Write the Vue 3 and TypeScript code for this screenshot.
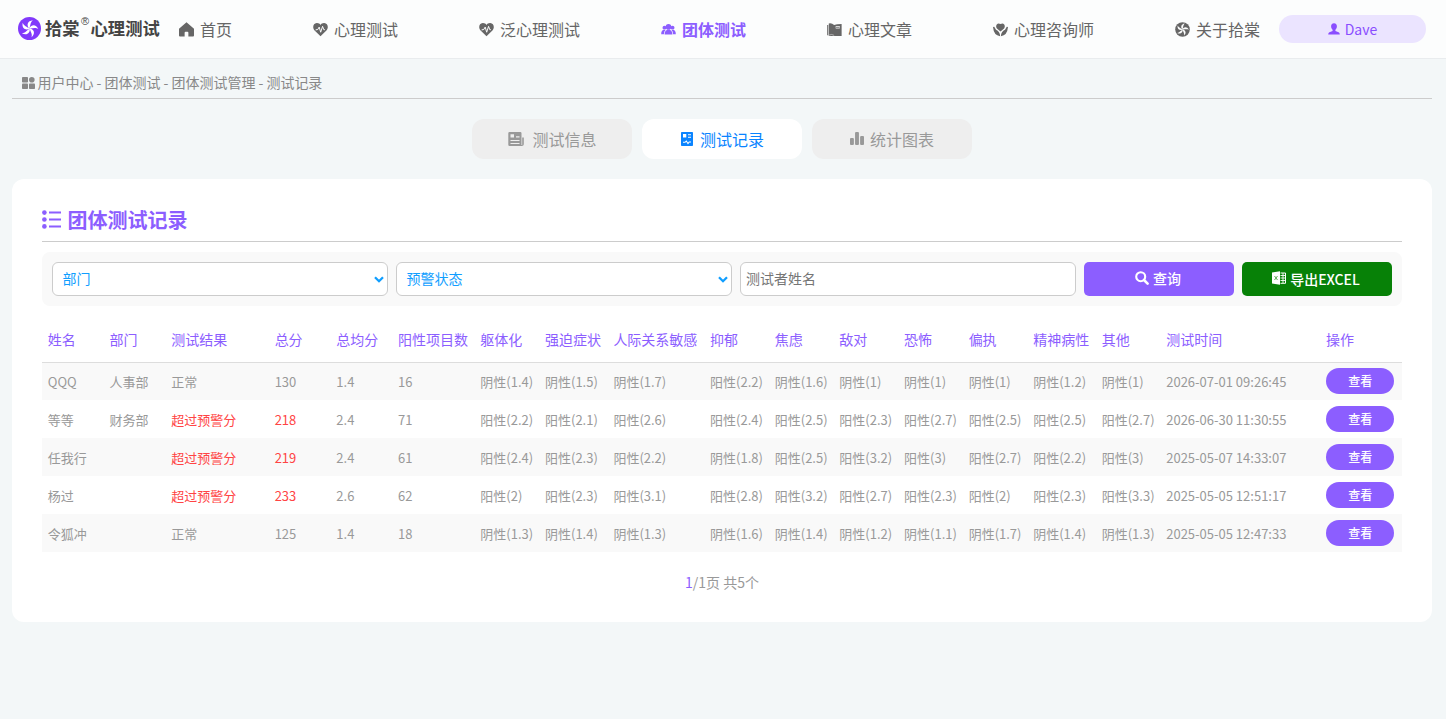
<script setup lang="ts">
interface NavItem { label: string; icon: string; active?: boolean }
interface TestRecord {
  name: string
  dept: string
  warn: boolean
  total: string
  avg: string
  count: string
  factors: string[]
  time: string
}

const navItems: NavItem[] = [
  { label: '首页', icon: 'home' },
  { label: '心理测试', icon: 'heart' },
  { label: '泛心理测试', icon: 'heart' },
  { label: '团体测试', icon: 'group', active: true },
  { label: '心理文章', icon: 'book' },
  { label: '心理咨询师', icon: 'care' },
  { label: '关于拾棠', icon: 'swirl' },
]

const columns: { label: string; width: number }[] = [
  { label: '姓名', width: 61.8 },
  { label: '部门', width: 61.7 },
  { label: '测试结果', width: 103.4 },
  { label: '总分', width: 61.7 },
  { label: '总均分', width: 61.8 },
  { label: '阳性项目数', width: 82.2 },
  { label: '躯体化', width: 64.7 },
  { label: '强迫症状', width: 68.4 },
  { label: '人际关系敏感', width: 96.7 },
  { label: '抑郁', width: 64.7 },
  { label: '焦虑', width: 64.6 },
  { label: '敌对', width: 64.7 },
  { label: '恐怖', width: 64.6 },
  { label: '偏执', width: 64.6 },
  { label: '精神病性', width: 68.5 },
  { label: '其他', width: 64.5 },
  { label: '测试时间', width: 159.7 },
  { label: '操作', width: 81.7 },
]

// 因子均分达到 2 分及以上为阳性
const factorText = (v: string): string => `${Number(v) >= 2 ? '阳性' : '阴性'}(${v})`

const records: TestRecord[] = [
  { name: 'QQQ', dept: '人事部', warn: false, total: '130', avg: '1.4', count: '16', factors: ['1.4', '1.5', '1.7', '2.2', '1.6', '1', '1', '1', '1.2', '1'], time: '2026-07-01 09:26:45' },
  { name: '等等', dept: '财务部', warn: true, total: '218', avg: '2.4', count: '71', factors: ['2.2', '2.1', '2.6', '2.4', '2.5', '2.3', '2.7', '2.5', '2.5', '2.7'], time: '2026-06-30 11:30:55' },
  { name: '任我行', dept: '', warn: true, total: '219', avg: '2.4', count: '61', factors: ['2.4', '2.3', '2.2', '1.8', '2.5', '3.2', '3', '2.7', '2.2', '3'], time: '2025-05-07 14:33:07' },
  { name: '杨过', dept: '', warn: true, total: '233', avg: '2.6', count: '62', factors: ['2', '2.3', '3.1', '2.8', '3.2', '2.7', '2.3', '2', '2.3', '3.3'], time: '2025-05-05 12:51:17' },
  { name: '令狐冲', dept: '', warn: false, total: '125', avg: '1.4', count: '18', factors: ['1.3', '1.4', '1.3', '1.6', '1.4', '1.2', '1.1', '1.7', '1.4', '1.3'], time: '2025-05-05 12:47:33' },
]

const blades = [0, 72, 144, 216, 288]
</script>

<template>
  <div class="page">
    <header class="header">
      <div class="brand">
        <svg class="brand-mark" viewBox="0 0 24 24">
          <circle cx="12" cy="12" r="12" fill="#8139fb" />
          <path v-for="a in blades" :key="a" :transform="`rotate(${a} 12 12)`" fill="#fff" d="M11.8 12.2C8.6 8.8 9.6 4 15.6 3.4C12.6 5.6 13.2 8.8 11.8 12.2Z" />
        </svg>
        <span class="brand-name">拾棠<sup>®</sup>心理测试</span>
      </div>
      <nav class="nav">
        <a v-for="item in navItems" :key="item.label" class="nav-item" :class="{ active: item.active }">
          <svg class="nav-icon" viewBox="0 0 16 16" fill="currentColor">
            <path v-if="item.icon === 'home'" d="M8 .3L0 7.2V14.4Q0 15.5 1 15.5H6V11.5Q6 10.3 7 10.3H9Q10 10.3 10 11.5V15.5H15Q16 15.5 16 14.4V7.2Z" />
            <template v-else-if="item.icon === 'heart'">
              <path d="M8 15.2L1.7 9C-.9 6.2 0 1.4 4 1.1C5.8 1 7.2 1.8 8 3.1C8.8 1.8 10.2 1 12 1.1C16 1.4 16.9 6.2 14.3 9Z" />
              <path d="M2.8 8.4L5.1 8L6.6 5.4L8.2 10.9L10.2 4.6L11.5 8.2H12.6" fill="none" stroke="#fcfdfd" stroke-width="1.05" />
            </template>
            <template v-else-if="item.icon === 'group'">
              <circle cx="3.7" cy="6" r="2.1" /><circle cx="12.3" cy="6" r="2.1" /><circle cx="8" cy="5.2" r="3" />
              <path d="M.2 13C.2 10 1.2 8.5 3.6 8.3L4.8 8.8C3.6 9.7 3.2 11 3.1 13ZM15.8 13C15.8 10 14.8 8.5 12.4 8.3L11.2 8.8C12.4 9.7 12.8 11 12.9 13ZM3.8 13.4C3.8 9.9 5.2 8.3 8 8.3S12.2 9.9 12.2 13.4Z" />
            </template>
            <template v-else-if="item.icon === 'book'">
              <path d="M.2 3.2H1.3V14H.2ZM1.9 1.5Q5 .6 7.6 3.2Q10 2 15.6 2V15H1.9Z" />
              <path d="M9.3 4.3H13.6V6.9H9.3Z" fill="#fcfdfd" /><path d="M9.6 5.6H13.3" stroke="currentColor" stroke-width="1" />
              <path d="M1.9 14.1Q5 12.4 7.6 14.2" fill="none" stroke="#fcfdfd" stroke-width=".5" />
            </template>
            <template v-else-if="item.icon === 'care'">
              <path d="M8 10.2L4.2 7C2.7 5 3.4 2 5.8 1.6L8 2.1L10.2 1.6C12.6 2 13.3 5 11.8 7Z" />
              <path d="M0 5.4L1.3 5L3.2 8.2Q7.4 9.8 7.6 15.2Q.8 14.5 0 5.4ZM16 5.4L14.7 5L12.8 8.2Q8.6 9.8 8.4 15.2Q15.2 14.5 16 5.4Z" />
            </template>
            <template v-else>
              <circle cx="8" cy="8" r="7.8" />
              <path v-for="a in blades" :key="a" :transform="`rotate(${a} 8 8)`" fill="#fcfdfd" d="M7.8 8.2C5.9 5.8 6.2 2.4 10.4 1.7C8.6 3.4 8.9 5.8 7.8 8.2Z" />
            </template>
          </svg>
          <span>{{ item.label }}</span>
        </a>
      </nav>
      <a class="user">
        <svg class="user-icon" viewBox="0 0 12 12" fill="currentColor"><path d="M6 .3C8 .3 9 1.6 8.9 3.5C8.8 5.2 8 6.3 7.4 6.8V8L10.6 9.2Q11.7 9.7 11.8 11.5H.2Q.3 9.7 1.4 9.2L4.6 8V6.8C4 6.3 3.2 5.2 3.1 3.5C3 1.6 4 .3 6 .3Z" /></svg>
        <span>Dave</span>
      </a>
    </header>

    <main class="main">
      <div class="crumbs">
        <svg class="crumb-icon" viewBox="0 0 13 12" fill="currentColor"><rect width="6" height="5.5" rx=".8" /><circle cx="9.8" cy="2.8" r="2.8" /><rect y="6.5" width="6" height="5.5" rx=".8" /><rect x="7" y="6.5" width="6" height="5.5" rx=".8" /></svg>
        <span>用户中心 - 团体测试 - 团体测试管理 - 测试记录</span>
      </div>

      <div class="tabs">
        <a class="tab info">
          <svg viewBox="0 0 16 16" fill="currentColor"><path fill-rule="evenodd" d="M1.5 1H12.3Q13.5 1 13.5 2.2V15H1.5Q.3 15 .3 13.8V2.2Q.3 1 1.5 1ZM2.5 3.2V6.4H6V3.2ZM8 5.3V6.5H11.5V5.3ZM2.5 8.9V9.9H11.5V8.9ZM2.5 11.9V12.9H11.5V11.9Z" /><path d="M14.2 6.5H15.8V13.2Q15.8 15 13.8 15H13V14H14.2Z" /></svg>
          <span>测试信息</span>
        </a>
        <a class="tab record active">
          <svg viewBox="0 0 12 14" fill="currentColor"><path fill-rule="evenodd" d="M.8 0H11.2Q12 0 12 .8V13.2Q12 14 11.2 14H.8Q0 14 0 13.2V.8Q0 0 .8 0ZM2 2V5.5H5.3V2ZM7 2.3V3.3H10V2.3ZM7 4.8V5.8H10V4.8Z" /><path d="M2 10.3H4L5.3 9L7 11.6L8.2 10H10" fill="none" stroke="#fff" stroke-width="1.1" /></svg>
          <span>测试记录</span>
        </a>
        <a class="tab chart">
          <svg viewBox="0 0 14 13" fill="currentColor"><rect y="6" width="3.9" height="7" rx="1" /><rect x="5.05" width="3.9" height="13" rx="1" /><rect x="10.1" y="4" width="3.9" height="9" rx="1" /></svg>
          <span>统计图表</span>
        </a>
      </div>

      <section class="card">
        <h2 class="title">
          <svg viewBox="0 0 19 19" fill="currentColor"><circle cx="2.4" cy="2.6" r="2.3" /><circle cx="2.4" cy="9.5" r="2.3" /><circle cx="2.4" cy="16.4" r="2.3" /><path d="M7 1.6H19V3.6H7ZM7 8.5H19V10.5H7ZM7 15.4H19V17.4H7Z" /></svg>
          <span>团体测试记录</span>
        </h2>

        <div class="filters">
          <div class="field select"><span>部门</span><svg viewBox="0 0 10 7"><path d="M1 1.2L5 5.2L9 1.2" fill="none" stroke="currentColor" stroke-width="2.3" /></svg></div>
          <div class="field select"><span>预警状态</span><svg viewBox="0 0 10 7"><path d="M1 1.2L5 5.2L9 1.2" fill="none" stroke="currentColor" stroke-width="2.3" /></svg></div>
          <input class="field" type="text" placeholder="测试者姓名" />
          <button class="btn search">
            <svg viewBox="0 0 14 14"><circle cx="5.7" cy="5.7" r="4.5" fill="none" stroke="currentColor" stroke-width="2.1" /><path d="M9 9L12.6 12.6" stroke="currentColor" stroke-width="2.6" stroke-linecap="round" /></svg>
            <span>查询</span>
          </button>
          <button class="btn export">
            <svg viewBox="0 0 14 14" fill="currentColor"><path d="M0 1.6L8 .2V13.8L0 12.4Z" /><path d="M8.5 2H13.5V12.3H8.5" fill="none" stroke="currentColor" stroke-width="1" /><path d="M8.5 4.5H13M8.5 7H13M8.5 9.5H13M11 2V12" stroke="currentColor" stroke-width=".9" /><path d="M2.5 5L5.5 9M5.5 5L2.5 9" stroke="#5fae56" stroke-width="1" /></svg>
            <span>导出EXCEL</span>
          </button>
        </div>

        <table class="grid">
          <colgroup><col v-for="c in columns" :key="c.label" :style="{ width: c.width + 'px' }" /></colgroup>
          <thead><tr><th v-for="c in columns" :key="c.label">{{ c.label }}</th></tr></thead>
          <tbody>
            <tr v-for="r in records" :key="r.time">
              <td>{{ r.name }}</td>
              <td>{{ r.dept }}</td>
              <td :class="{ warn: r.warn }">{{ r.warn ? '超过预警分' : '正常' }}</td>
              <td :class="{ warn: r.warn }">{{ r.total }}</td>
              <td>{{ r.avg }}</td>
              <td>{{ r.count }}</td>
              <td v-for="(f, i) in r.factors" :key="i">{{ factorText(f) }}</td>
              <td>{{ r.time }}</td>
              <td class="action"><button class="view">查看</button></td>
            </tr>
          </tbody>
        </table>

        <div class="pager"><b>1</b>/1页 共5个</div>
      </section>
    </main>
  </div>
</template>

<style>
body { background: #f3f7f8; }
</style>

<style scoped>
.page { min-height: 719px; font-family: "Noto Sans CJK SC", sans-serif; color: #999; background: #f3f7f8; }
.page * { box-sizing: border-box; }
.header { display: flex; align-items: center; height: 59px; padding: 0 20px 0 18px; background: #fcfdfd; border-bottom: 1px solid #e9ecee; }
.brand { display: flex; align-items: center; width: 161px; height: 58px; padding-bottom: 2px; }
.brand-mark { width: 23px; height: 23px; margin-right: 4px; }
.brand-name { display: flex; font-size: 17.3px; line-height: 24px; font-weight: 700; color: #444; white-space: nowrap; }
.brand-name sup { width: 11px; font-family: "Liberation Sans", sans-serif; font-size: 11px; line-height: 10px; font-weight: 400; text-align: center; }
.nav { display: flex; justify-content: space-between; width: 1081px; margin-right: 19px; }
.nav-item { display: flex; align-items: center; gap: 6px; font-size: 16px; line-height: 24px; color: #666; }
.nav-item.active { color: #8c5eff; font-weight: 700; }
.nav-icon { width: 15px; height: 15px; }
.user { display: flex; align-items: center; justify-content: center; gap: 5px; width: 147px; height: 28px; border-radius: 14px; background: #ebe4ff; color: #8a4dff; font-size: 14px; }
.user-icon { width: 12px; height: 12px; }

.main { padding: 0 14px 0 12px; }
.crumbs { display: flex; align-items: center; gap: 2.5px; height: 40px; padding: 8px 0 0 10px; border-bottom: 1px solid #ccc; font-size: 14px; color: #888; }
.crumbs span { padding-bottom: 2px; letter-spacing: -.02px; }
.crumb-icon { width: 13px; height: 12px; }
.tabs { display: flex; justify-content: center; gap: 10px; margin: 20px 0; }
.tab { display: flex; align-items: center; justify-content: center; width: 160px; height: 40px; border-radius: 12px; background: #eee; font-size: 16px; }
.tab.active { background: #fff; color: #0a84ff; }
.tab.info svg { width: 16px; height: 16px; margin: 0 8px 1px 1px; }
.tab.record svg { width: 12px; height: 14px; margin: 0 7px 1px 1px; }
.tab.chart svg { width: 14px; height: 13px; margin: 0 6px 1px 0; }

.card { height: 443px; padding: 20px 30px; border-radius: 12px; background: #fff; }
.title { display: flex; align-items: center; gap: 6.5px; height: 43px; margin: 0 0 10px; padding-bottom: 1px; border-bottom: 1px solid #ccc; color: #8c5eff; font-size: 20px; font-weight: 700; }
.title svg { width: 19px; height: 19px; margin-bottom: 1px; }
.title span { padding-bottom: 1px; }
.filters { display: flex; gap: 8px; height: 54px; padding: 10px; border-radius: 8px; background: #f9f9f9; }
.field { display: flex; align-items: center; width: 336px; height: 34px; padding: 0 5px 2px; border: 1px solid #ccc; border-radius: 6px; background: #fff; font-family: inherit; font-size: 14px; }
.field::placeholder { color: #757575; opacity: 1; }
.field.select { justify-content: space-between; padding: 0 3px 0 9.5px; color: #109eff; }
.field.select span { padding-bottom: 2px; }
.field.select svg { width: 10px; height: 7px; }
.btn { display: flex; align-items: center; justify-content: center; width: 150px; height: 34px; padding: 0 2px 0 0; border: 0; border-radius: 5px; color: #fff; font-family: inherit; font-size: 14px; font-weight: 500; }
.btn svg { width: 14px; height: 14px; margin: 0 4px 2px 0; }
.btn span { padding-bottom: 2px; }
.search { background: #8c5eff; }
.export { background: #078107; }
.btn.export span { padding-bottom: 0; }

.grid { width: 1360px; margin-top: 12px; table-layout: fixed; border-collapse: separate; border-spacing: 0; text-align: left; white-space: nowrap; }
.grid th { height: 45px; padding: 0 0 3px 5.75px; border-bottom: 1px solid #ddd; color: #8c5eff; font-size: 14px; font-weight: 400; }
.grid td { height: 38px; padding: 0 0 0 5.75px; font-size: 13px; }
.grid tbody tr:first-child td { height: 37px; }
.grid tbody tr:nth-child(odd) { background: #f9f9f9; }
.grid td.warn { color: #ff4444; }
.grid tbody td.action { padding: 0 0 6px 6px; vertical-align: bottom; }
.view { display: block; width: 68px; height: 26px; padding: 0 0 1px; border: 0; border-radius: 13px; background: #8c5eff; color: #fff; font-family: inherit; font-size: 12px; line-height: 17px; font-weight: 500; }
.pager { margin-top: 20px; text-align: center; font-size: 14px; line-height: 21px; }
.pager b { color: #8c5eff; font-weight: 400; }
</style>
